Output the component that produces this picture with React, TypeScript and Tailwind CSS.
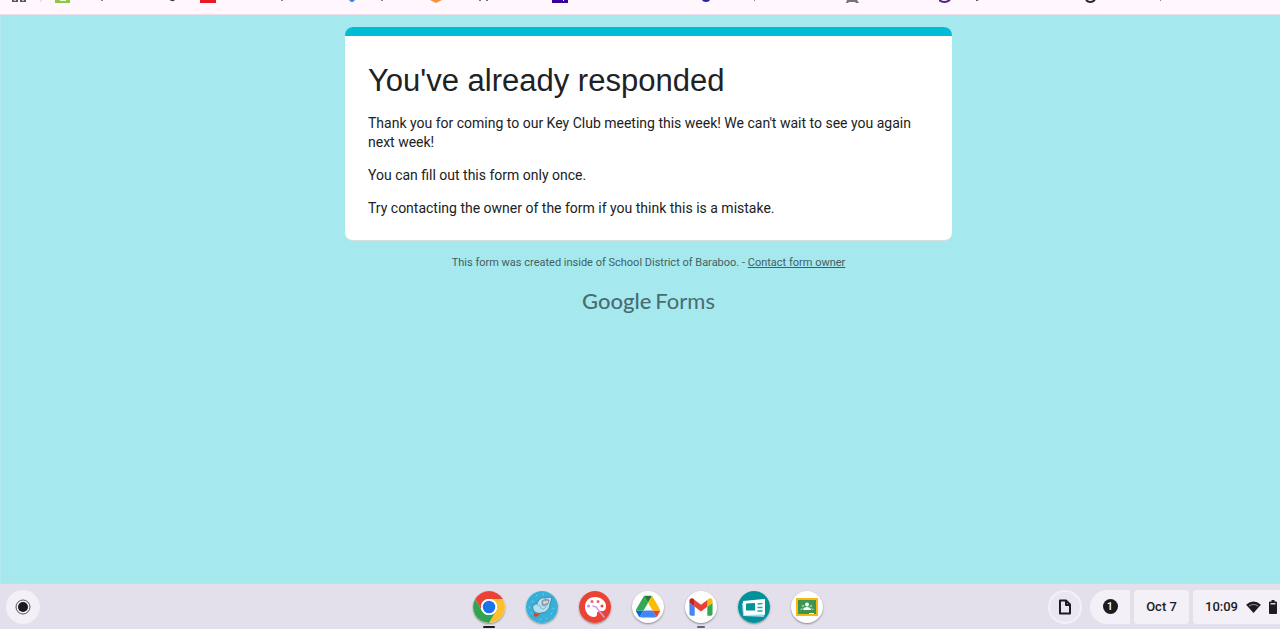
import type { ReactNode } from "react";

// Lower edges of the bookmark icons and labels, the rest is scrolled off the top
const bookmarks = [
  {
    name: "Apps",
    width: 43,
    art: (
      <g>
        <path d="M0 0h6v2H0zM8 0h6v2H8z" fill="#5a545c" />
        <path d="M2 0h2v1H2zM10 0h2v1h-2z" fill="#cfc8d0" />
        <path d="M28 0h2v2h-2z" fill="#efdcfb" />
      </g>
    ),
  },
  {
    name: "Bookmark 1",
    width: 145,
    art: (
      <g>
        <path d="M0 0h15v3H0z" fill="#8fc73e" />
        <path d="M5 0h6v1H5z" fill="#eef7e0" />
        <path d="M46 0h2v1h-2z" fill="#8b8792" />
        <path d="M115 0h5q-1 1.500-3 1-2 0-2-1z" fill="#3f3c44" />
      </g>
    ),
  },
  {
    name: "Bookmark 2",
    width: 147,
    art: (
      <g>
        <path d="M0 0h16v3H0z" fill="#e51b24" />
        <path d="M81 0h2v1h-2z" fill="#8b8792" />
      </g>
    ),
  },
  {
    name: "Bookmark 3",
    width: 83,
    art: (
      <g>
        <path d="M2 0h6L6 2H4z" fill="#3b86ee" />
        <path d="M34 0h2v1h-2z" fill="#8b8792" />
      </g>
    ),
  },
  {
    name: "Bookmark 4",
    width: 122,
    art: (
      <g>
        <path d="M0 0h12L8 2 6 3 4 2z" fill="#f6913d" />
        <path d="M49 0h2v1h-2zM56 0h2v1h-2z" fill="#77737d" />
      </g>
    ),
  },
  {
    name: "Bookmark 5",
    width: 148,
    art: (
      <g>
        <path d="M0 0h16v3H0z" fill="#3b009b" />
        <path d="M11 0h1v1h-1z" fill="#fff" />
      </g>
    ),
  },
  {
    name: "Bookmark 6",
    width: 146,
    art: (
      <g>
        <path d="M2 0h8q-1 2-4 2T2 0z" fill="#241fa0" />
        <path d="M54 0h1v1h-1z" fill="#8b8792" />
      </g>
    ),
  },
  {
    name: "Bookmark 7",
    width: 93,
    art: (
      <path d="M1 0h10l2 3h-3l-1-1H3L2 3H0z" fill="#77727a" />
    ),
  },
  {
    name: "Bookmark 8",
    width: 146,
    art: (
      <g>
        <path d="M0 0q5 4 11 0" fill="none" stroke="#51208a" strokeWidth="2" />
        <path d="M37 0h3l-2 1h-1z" fill="#55515b" />
      </g>
    ),
  },
  {
    name: "Bookmark 9",
    width: 120,
    art: (
      <g>
        <path d="M1 0q4 4 9 0" fill="none" stroke="#29262b" strokeWidth="2" />
        <path d="M75 0h1v1h-1z" fill="#8b8792" />
      </g>
    ),
  },
];

function Chrome() {
  const wedge = "M24 12H44.780A24 24 0 0 0 3.220 12L13.600 30A12 12 0 0 1 24 12z";
  return (
    <svg viewBox="0 0 48 48" className="size-full">
      <path d={wedge} fill="#ea4335" />
      <path d={wedge} fill="#fbc02d" transform="rotate(120 24 24)" />
      <path d={wedge} fill="#34a350" transform="rotate(240 24 24)" />
      <circle cx="24" cy="24" r="12" fill="#fff" />
      <circle cx="24" cy="24" r="9.400" fill="#1a73e8" />
    </svg>
  );
}

function Bird() {
  return (
    <svg viewBox="0 0 32 32" className="size-full">
      <circle cx="16" cy="16" r="16" fill="#36b0d8" />
      <g stroke="#7fd0ea" strokeWidth="1" strokeLinecap="round">
        <path d="M10 5l1-1M17 3v1M6 11l1-1M3 16l1 1M27 18l1-1M25 23l1-1M20 28l1-1M5 22l1 1M14 29l1-1" />
      </g>
      <path
        d="M7 18c-1-3 1-5 4-5 1-4 4-7 8-6 3-1 6-1 7 0-1 2-1 4-2 6 0 5-4 9-9 9-4 1-7-1-8-4z"
        fill="#b5e0f0"
        stroke="#3e7795"
        strokeWidth="0.800"
      />
      <path d="M11 14c2 0 4 1 4 4M20 15c0 2-2 3-4 3" fill="none" stroke="#6aa9c4" strokeWidth="0.800" />
      <path d="M16 10c2-2 5-2 7-1l-1 4c-2 2-5 2-6 1z" fill="#9aa6ba" stroke="#65708b" strokeWidth="0.500" />
      <circle cx="18.500" cy="11.500" r="1.300" fill="#e0e6ef" />
      <circle cx="21" cy="11" r="1" fill="#e0e6ef" />
      <path d="M8 22l3 1 3-1-1 2-3 2-2-1z" fill="#d9402c" />
    </svg>
  );
}

function Palette() {
  return (
    <svg viewBox="0 0 32 32" className="size-full">
      <circle cx="16" cy="16" r="16" fill="#ea4335" />
      <path
        d="M16 6C10 6 6 10 6 16c0 5 4 10 9 10 2 0 3-1 3-3s1-3 3-3h2c3 0 4-2 4-5 0-5-5-9-11-9z"
        fill="#fff"
      />
      <circle cx="9.500" cy="15" r="1.500" fill="#c986f3" />
      <circle cx="13" cy="10.500" r="1.500" fill="#f0655a" />
      <circle cx="19" cy="10.500" r="1.500" fill="#f0655a" />
      <circle cx="23" cy="15" r="1.500" fill="#ea4335" />
      <path d="M14 15l3 1 8 10" fill="none" stroke="#dc95ee" strokeWidth="1.500" strokeLinecap="round" />
    </svg>
  );
}

function Drive() {
  return (
    <svg viewBox="-14 -17 115 115" className="size-full">
      <path d="m6.600 66.850 3.850 6.650c.8 1.400 1.950 2.500 3.300 3.300l13.750-23.800h-27.500c0 1.550.4 3.100 1.200 4.500z" fill="#0066da" />
      <path d="m43.650 25-13.750-23.800c-1.350.8-2.500 1.900-3.300 3.300l-25.400 44a9.060 9.060 0 0 0-1.200 4.500h27.500z" fill="#34a853" />
      <path d="m73.550 76.800c1.350-.8 2.500-1.900 3.300-3.300l1.600-2.750 7.650-13.250c.8-1.400 1.200-2.950 1.200-4.500h-27.500l5.850 11.500z" fill="#ea4335" />
      <path d="m43.650 25 13.750-23.800c-1.350-.8-2.900-1.200-4.500-1.200h-18.500c-1.600 0-3.150.45-4.500 1.200z" fill="#188038" />
      <path d="m59.800 53h-32.300l-13.750 23.800c1.350.8 2.900 1.200 4.500 1.200h50.800c1.600 0 3.150-.45 4.500-1.200z" fill="#4285f4" />
      <path d="m73.400 26.500-12.700-22c-.8-1.400-1.950-2.500-3.300-3.300l-13.750 23.800 16.150 28h27.450c0-1.550-.4-3.100-1.200-4.500z" fill="#fbbc04" />
    </svg>
  );
}

function Gmail() {
  return (
    <svg viewBox="35 14 122 122" className="size-full">
      <path d="M58 108h14V74L52 59v43c0 3.320 2.690 6 6 6" fill="#4285f4" />
      <path d="M120 108h14c3.320 0 6-2.690 6-6V59l-20 15" fill="#34a853" />
      <path d="M120 48v26l20-15v-8c0-7.420-8.470-11.650-14.400-7.200" fill="#fbbc04" />
      <path d="M72 74V48l24 18 24-18v26L96 92" fill="#ea4335" />
      <path d="M52 51v8l20 15V48l-5.600-4.200c-5.940-4.450-14.400-.22-14.400 7.200" fill="#c5221f" />
    </svg>
  );
}

function Screencast() {
  return (
    <svg viewBox="0 0 32 32" className="size-full">
      <circle cx="16" cy="16" r="16" fill="#019299" />
      <path d="M4 12l22 2v12L5 25z" fill="#a7c9f9" />
      <path d="M5 11l22-2v15L6 25z" fill="#b1f3f4" />
      <path d="M5 10l22-2v15L6 24z" fill="#fff" />
      <path d="M8 12.500l9-.5v7.500H8z" fill="#019299" />
      <path d="M19.500 13l5-.5M19.500 16.500h5M19.500 20h5" stroke="#18a8b0" strokeWidth="1.500" />
    </svg>
  );
}

function Classroom() {
  return (
    <svg viewBox="0 0 32 32" className="size-full">
      <path d="M5 7h22v18H5z" fill="#f5b912" />
      <path d="M7 9h18v14H7z" fill="#3d9450" />
      <circle cx="16" cy="13.500" r="2" fill="#fff" />
      <circle cx="12" cy="15" r="1.300" fill="#8fc79b" />
      <circle cx="20" cy="15" r="1.300" fill="#8fc79b" />
      <path d="M12 19c0-2 2-3 4-3s4 1 4 3z" fill="#fff" />
      <path d="M9 19c0-1 1-2 3-2l-1 2zM23 19c0-1-1-2-3-2l1 2z" fill="#8fc79b" />
      <path d="M18 22h5v1h-5z" fill="#fff" />
    </svg>
  );
}

const apps: { name: string; icon: ReactNode; mark?: string }[] = [
  { name: "Chrome", icon: <Chrome />, mark: "w-3 bg-[#1d1b22]" },
  { name: "Bird", icon: <Bird /> },
  { name: "Canvas", icon: <Palette /> },
  { name: "Drive", icon: <Drive /> },
  { name: "Gmail", icon: <Gmail />, mark: "w-2 bg-[#65617a]" },
  { name: "Screencast", icon: <Screencast /> },
  { name: "Classroom", icon: <Classroom /> },
];

function BookmarkBar() {
  return (
    <nav className="flex h-[15px] items-start overflow-hidden border-b border-[#ecdcea] bg-[#fff6fe] pl-3">
      {bookmarks.map((b) => (
        <button key={b.name} aria-label={b.name} className="shrink-0" style={{ width: b.width }}>
          <svg width={b.width} height="4" className="block">
            {b.art}
          </svg>
        </button>
      ))}
    </nav>
  );
}

function Shelf() {
  return (
    <footer className="grid h-[46px] grid-cols-[1fr_auto_1fr] items-center overflow-hidden border-t border-[#cfdae2] bg-[#e3e0eb] pl-4">
      <button aria-label="Launcher" className="-ml-2.5 flex size-[34px] items-center justify-center rounded-full bg-[#f3f0f7]">
        <svg viewBox="0 0 16 16" className="size-4">
          <circle cx="8" cy="8" r="7" fill="none" stroke="#56535b" strokeWidth="1" />
          <circle cx="8" cy="8" r="5" fill="#1d1b20" />
        </svg>
      </button>

      <div className="flex gap-[21px]">
        {apps.map((app) => (
          <button key={app.name} aria-label={app.name} className="relative size-8 rounded-full bg-white shadow-[0_1px_2px_rgba(0,0,0,0.4)]">
            {app.icon}
            {app.mark && (
              <span className={`absolute -bottom-[5px] left-1/2 h-0.5 -translate-x-1/2 rounded-full ${app.mark}`} />
            )}
          </button>
        ))}
      </div>

      <div className="flex items-center justify-end gap-1 text-[#1d1b20]">
        <button aria-label="Files" className="mr-1 flex size-[34px] items-center justify-center rounded-full border-2 border-[#f3f0f7] bg-[#e9e5f3]">
          <svg viewBox="0 0 14 16" className="h-4 w-3.5" fill="none" stroke="currentColor" strokeWidth="2" strokeLinejoin="round">
            <path d="M2 1.500h6l4 4v9H2z" />
            <path d="M8 2v4h4" />
          </svg>
        </button>
        <button className="flex h-[34px] w-10 items-center justify-center rounded-l-full rounded-r-sm bg-[#f3f0f7]">
          <span className="flex size-[15px] items-center justify-center rounded-full bg-[#1d1b20] text-[11px] leading-none font-medium text-white">1</span>
        </button>
        <button className="h-[34px] w-[55px] rounded-sm bg-[#f3f0f7] text-[13px] font-medium">Oct 7</button>
        <button className="flex h-[34px] w-[87px] items-center rounded-l-sm bg-[#f3f0f7] pl-3 text-[13px] font-medium">
          10:09
          <svg viewBox="0 0 16 13" className="ml-2 h-3 w-[15px] shrink-0">
            <path d="M0 4q8-7 16 0L8 13z" fill="currentColor" />
            <path d="M3 5.500q5-3.500 10 0" fill="none" stroke="#a19ea8" strokeWidth="1" />
          </svg>
          <svg viewBox="0 0 8 14" className="ml-2 h-3.5 w-2 shrink-0">
            <path d="M2.500 0h3v1.500H7q1 0 1 1V13q0 1-1 1H1q-1 0-1-1V2.500q0-1 1-1h1.500z" fill="currentColor" />
            <path d="M1.500 3h5v1.500h-5z" fill="#d5d2da" />
          </svg>
        </button>
      </div>
    </footer>
  );
}

export default function App() {
  return (
    <div className="flex min-h-screen flex-col bg-[#a5e9ef] font-[Roboto,sans-serif]">
      <BookmarkBar />

      <main className="flex flex-1 flex-col items-center border-l border-[#b4e9ef] pt-3 pl-4">
        <section className="w-full max-w-[607px] overflow-hidden rounded-lg border-b border-[#d5dfe2] bg-white text-sm leading-[19px] text-[#202124]">
          <div className="h-[9px] bg-[#00bcd7]" />
          <div className="flex flex-col gap-3.5 px-[23px] pt-[26px] pb-[22px]">
            <h1 className="font-['Liberation_Sans',sans-serif] text-[31px] leading-[38px]">You've already responded</h1>
            <p>Thank you for coming to our Key Club meeting this week! We can't wait to see you again next week!</p>
            <p>You can fill out this form only once.</p>
            <p>Try contacting the owner of the form if you think this is a mistake.</p>
          </div>
        </section>

        <p className="mt-3.5 text-[11px] leading-4 text-[#42605f]">
          This form was created inside of School District of Baraboo. -{" "}
          <a href="#" className="underline">Contact form owner</a>
        </p>

        <div className="mt-[18px] flex gap-1 font-[Lato,sans-serif] text-[22px] leading-6 text-[#4a6b70]">
          <span className="font-medium">Google</span>
          <span>Forms</span>
        </div>
      </main>

      <Shelf />
    </div>
  );
}
